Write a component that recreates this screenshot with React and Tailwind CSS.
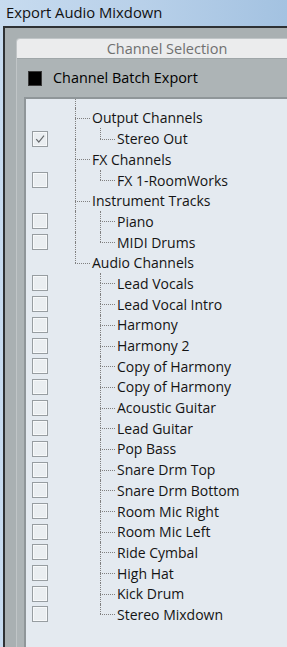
import React from "react";

const DOT = "border-dotted border-[#808080]";

const groups = [
  { name: "Output Channels", children: [["Stereo Out", true]] },
  { name: "FX Channels", children: [["FX 1-RoomWorks", false]] },
  { name: "Instrument Tracks", children: [["Piano", false], ["MIDI Drums", false]] },
  {
    name: "Audio Channels",
    children: [
      "Lead Vocals",
      "Lead Vocal Intro",
      "Harmony",
      "Harmony 2",
      "Copy of Harmony",
      "Copy of Harmony",
      "Acoustic Guitar",
      "Lead Guitar",
      "Pop Bass",
      "Snare Drm Top",
      "Snare Drm Bottom",
      "Room Mic Right",
      "Room Mic Left",
      "Ride Cymbal",
      "High Hat",
      "Kick Drum",
      "Stereo Mixdown",
    ].map((n) => [n, false]),
  },
];

function Box({ checked }) {
  return (
    <div className="ml-[6px] flex h-[16px] w-[16px] items-center justify-center border border-[#979da1] bg-[#eaeef1] shadow-[inset_0_0_0_1px_#f7f9fa]">
      {checked && (
        <svg width="12" height="12" viewBox="0 0 12 12">
          <path d="M2.2 6.2 L4.8 9 L10 2.6" fill="none" stroke="#65696c" strokeWidth="1.15" />
        </svg>
      )}
    </div>
  );
}

// vertical line column with optional horizontal branch
function Connector({ up, down, branch, width, hwidth }) {
  return (
    <div className={"flex h-full shrink-0 flex-col " + width}>
      <div className={up ? "h-1/2 border-l " + DOT : "h-1/2"} />
      <div className={"flex h-1/2"}>
        {branch ? (
          <div className={(down ? "border-l " : "") + "h-full border-t " + DOT + " " + hwidth} />
        ) : (
          <div className={down ? "h-full border-l " + DOT : "h-full"} />
        )}
      </div>
    </div>
  );
}

export default function App() {
  const rows = [];
  groups.forEach((g, gi) => {
    const lastGroup = gi === groups.length - 1;
    rows.push(
      <div key={"g" + gi} className="flex h-[20.7px] items-center">
        <div className="w-[49px] shrink-0" />
        <Connector up down={!lastGroup} branch width="w-[17px]" hwidth="w-[15px]" />
        <span className="whitespace-nowrap">{g.name}</span>
      </div>
    );
    g.children.forEach(([name, checked], ci) => {
      const lastChild = ci === g.children.length - 1;
      rows.push(
        <div key={"c" + gi + "-" + ci} className="flex h-[20.7px] items-center">
          <div className="flex w-[49px] shrink-0 items-center">
            <Box checked={checked} />
          </div>
          <Connector up={!lastGroup} down={!lastGroup} width="w-[25px]" />
          <Connector up down={!lastChild} branch width="w-[17px]" hwidth="w-[15px]" />
          <span className="whitespace-nowrap">{name}</span>
        </div>
      );
    });
  });

  return (
    <div className="h-[647px] w-[287px] overflow-hidden bg-gradient-to-r from-[#c7dbef] via-[#b8d0e9] to-[#a3c2e1] font-['Open_Sans',sans-serif]">
      <div className="h-[26px] pl-[6px] pt-[3px] text-[14.8px] leading-[18px] text-[#111]">
        Export Audio Mixdown
      </div>
      <div className="ml-[3px] h-[621px] border-l-2 border-t-2 border-[#2e3134] bg-[#a9b0b2] pl-[11px] pt-[10px]">
        <div className="flex h-full w-[301px] flex-col rounded-tl-[4px] border-l border-t border-[#c0c5c7] bg-[#adb4b6]">
          <div className="h-[20px] rounded-tl-[3px] border-b border-[#9fa6a8] bg-[#ebeced] text-center text-[14.5px] leading-[19px] text-[#707070]">
            Channel Selection
          </div>
          <div className="flex h-[38px] items-center pl-[11px]">
            <div className="h-[15px] w-[14px] border border-[#3a3a3a] bg-black" />
            <span className="ml-[11px] text-[14.4px] text-black">Channel Batch Export</span>
          </div>
          <div className="ml-[7px] flex-1 border-l-2 border-t-2 border-[#8f9699] bg-[#e4eaf0] text-[14px] text-[#141414]">
            <div className={"ml-[49px] h-[8.65px] border-l " + DOT} />
            {rows}
          </div>
        </div>
      </div>
    </div>
  );
}
